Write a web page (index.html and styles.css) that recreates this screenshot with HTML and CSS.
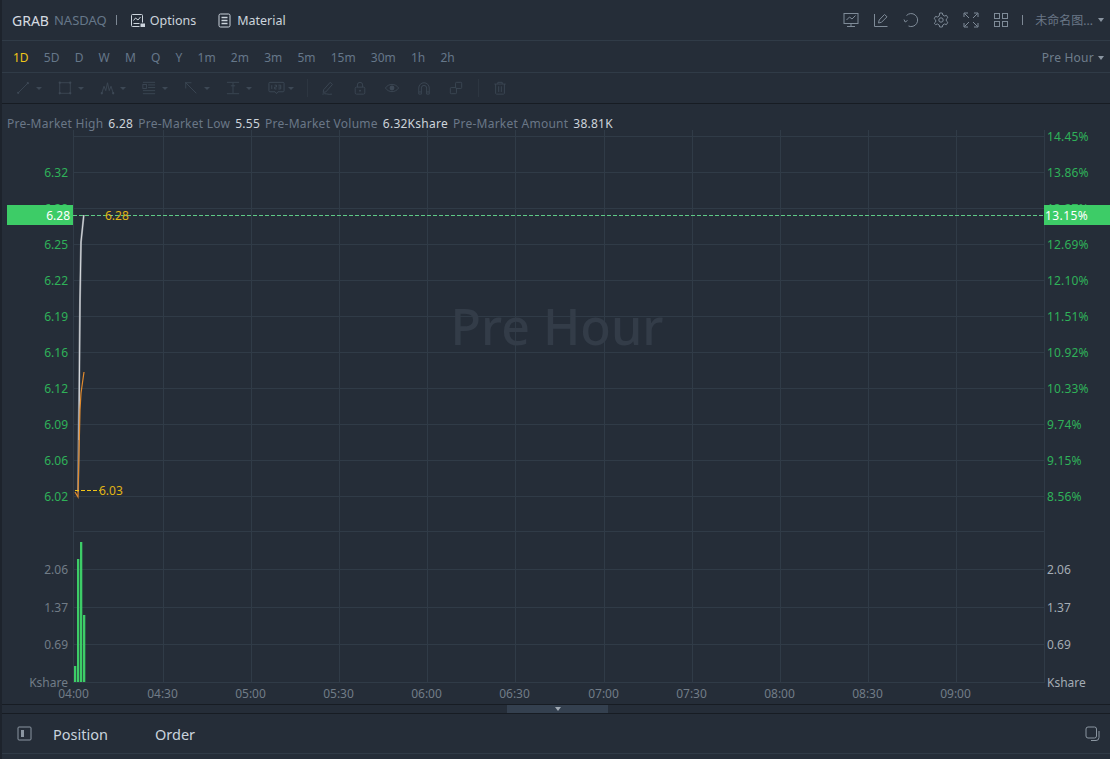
FILE: index.html
```html
<!DOCTYPE html>
<html lang="en">
<head>
<meta charset="utf-8">
<title>GRAB chart</title>
<link rel="stylesheet" href="styles.css">
</head>
<body>
<div class="app">
  <header class="topbar">
    <span class="sym">GRAB</span><span class="exch">NASDAQ</span><span class="sep sep-l"></span>
    <span class="tab tab-options">
      <svg class="ic15" viewBox="0 0 15 15"><path d="M12.500 9.500V2.500a1 1 0 0 0-1-1h-9a1 1 0 0 0-1 1v10a1 1 0 0 0 1 1h7"/><path d="M3.500 7.500l2-2.500 2.500 2 2.500-3"/><path d="M3.500 10.500h6"/><rect class="fill" x="10.500" y="10.500" width="4.500" height="3.500"/></svg>
      Options</span>
    <span class="tab tab-material">
      <svg class="ic15" viewBox="0 0 13 15"><rect x="1" y="1" width="11" height="13" rx="1.500"/><path class="thick" d="M3.500 4.500h6M3.500 7.500h6M3.500 10.500h6"/></svg>
      Material</span>
    <span class="grow"></span>
    <div class="tools">
      <svg class="ic" viewBox="0 0 16 16"><rect x="1" y="1.500" width="14" height="10"/><path d="M3.500 8l3-3 2.500 2 3.500-3.500M8 11.500v3M4 14.500h8"/></svg>
      <svg class="ic" viewBox="0 0 16 16"><path d="M1.500 2v12.500h13"/><path d="M5.500 11l.7-3L11.500 2.500l2.500 2.300L8.500 10.300z"/></svg>
      <svg class="ic" viewBox="0 0 16 16"><path d="M3.500 3.500A6.500 6.500 0 1 1 5.500 14"/><path d="M1 7.500l1.200 2.500 2.300-1.500"/></svg>
      <svg class="ic" viewBox="0 0 16 16"><path d="M6.700 1h2.600l.5 2 1.700 1 2-.6 1.300 2.300-1.500 1.400v1.800l1.500 1.400-1.300 2.300-2-.6-1.700 1-.5 2H6.700l-.5-2-1.700-1-2 .6L1.200 11.300l1.500-1.400V8.100L1.200 6.700l1.300-2.300 2 .6 1.700-1z"/><circle cx="8" cy="8" r="2.200"/></svg>
      <svg class="ic" viewBox="0 0 16 16"><path d="M1 5V1h4M11 1h4v4M15 11v4h-4M5 15H1v-4M1.500 1.500L6 6M14.500 1.500L10 6M14.500 14.500L10 10M1.500 14.500L6 10"/></svg>
      <svg class="ic" viewBox="0 0 16 16"><rect x="1.500" y="1.500" width="5" height="5"/><rect x="9.500" y="1.500" width="5" height="5"/><rect x="1.500" y="9.500" width="5" height="5"/><rect x="9.500" y="9.500" width="5" height="5"/></svg>
    </div>
    <span class="sep sep-r"></span>
    <span class="layout">未命名图...</span><span class="caret caret-top"></span>
  </header>

  <nav class="periods">
    <span class="per on">1D</span><span class="per">5D</span><span class="per">D</span><span class="per">W</span><span class="per">M</span><span class="per">Q</span><span class="per">Y</span><span class="per">1m</span><span class="per">2m</span><span class="per">3m</span><span class="per">5m</span><span class="per">15m</span><span class="per">30m</span><span class="per">1h</span><span class="per">2h</span>
    <span class="grow"></span>
    <span class="session">Pre Hour</span><span class="caret"></span>
  </nav>

  <div class="draw">
    <span class="dt"><svg class="dic" viewBox="0 0 16 16"><path d="M2.500 13.500L13.500 2.500"/><circle class="node" cx="2.500" cy="13.500" r="1.300"/><circle class="node" cx="13.500" cy="2.500" r="1.300"/></svg><i class="dc"></i></span>
    <span class="dt"><svg class="dic" viewBox="0 0 16 16"><rect x="2" y="2" width="12" height="12"/><circle class="node" cx="2" cy="2" r="1.300"/><circle class="node" cx="14" cy="2" r="1.300"/><circle class="node" cx="2" cy="14" r="1.300"/><circle class="node" cx="14" cy="14" r="1.300"/></svg><i class="dc"></i></span>
    <span class="dt"><svg class="dic dic-m" viewBox="0 0 16 16"><path d="M1.500 14l2.500-8 2 5 2-9 2 9 2-5 2.500 8"/><circle class="node" cx="1.500" cy="14" r="1.300"/><circle class="node" cx="14.500" cy="14" r="1.300"/></svg><i class="dc dc-m"></i></span>
    <span class="dt"><svg class="dic" viewBox="0 0 16 16"><path d="M1 1.500h14M7 4.500h8M7 7.500h8M1 11h14M1 14.500h14"/><rect x="1" y="4" width="4" height="4.500"/></svg><i class="dc"></i></span>
    <span class="dt"><svg class="dic" viewBox="0 0 16 16"><path d="M2 2l12 12M1.500 2h7M2 1.500v7"/></svg><i class="dc"></i></span>
    <span class="dt"><svg class="dic" viewBox="0 0 16 16"><path d="M1 1.500h14M1 14.500h14M8 2v12M5.500 5.500h5"/></svg><i class="dc"></i></span>
    <span class="dt dt-wide"><svg class="dic dic-w" viewBox="0 0 18 14"><path d="M2 1h14a1 1 0 0 1 1 1v8a1 1 0 0 1-1 1h-5.500L9 13l-1.500-2H2a1 1 0 0 1-1-1V2a1 1 0 0 1 1-1z"/><path d="M4 4v4M7 4h2v2H7v2h2M11 4h2.500v4H11M11 6h2.500"/></svg><i class="dc dc-w"></i></span>
    <i class="vsep"></i>
    <span class="dt dt-plain"><svg class="dic" viewBox="0 0 16 16"><path d="M3 10L10.500 1.500l2.500 2.500-7.500 8.500-3 .5z"/><path d="M1.500 15c4-1.500 6 1 11 0"/></svg></span>
    <span class="dt dt-plain"><svg class="dic" viewBox="0 0 16 16"><rect x="2.500" y="7" width="11" height="8" rx="1.500"/><path d="M5 7V4.500a3 3 0 0 1 6 0V7"/><circle class="node" cx="8" cy="11" r="1"/></svg></span>
    <span class="dt dt-plain"><svg class="dic" viewBox="0 0 16 16"><path d="M.5 8c3.500-5.500 11.500-5.500 15 0-3.500 5.500-11.500 5.500-15 0z"/><circle class="node" cx="8" cy="8" r="2.800"/></svg></span>
    <span class="dt dt-plain"><svg class="dic" viewBox="0 0 16 16"><path d="M2 15V8a6 6 0 0 1 12 0v7h-3V8a3 3 0 0 0-6 0v7zM2 12.500h3M11 12.500h3"/></svg></span>
    <span class="dt dt-plain"><svg class="dic" viewBox="0 0 16 16"><rect x="1.500" y="7.500" width="7" height="7" rx="1"/><rect x="7.500" y="1.500" width="7" height="7" rx="1"/></svg></span>
    <i class="vsep vsep-b"></i>
    <span class="dt dt-plain"><svg class="dic" viewBox="0 0 16 16"><path d="M1.500 3.500h13M5.500 3.500V1.500h5v2M3 3.500v10.500a1 1 0 0 0 1 1h8a1 1 0 0 0 1-1V3.500M6.500 6v6.500M9.500 6v6.500"/></svg></span>
  </div>

  <div class="stats">
    <span class="k">Pre-Market High</span><span class="v">6.28</span>
    <span class="k">Pre-Market Low</span><span class="v">5.55</span>
    <span class="k">Pre-Market Volume</span><span class="v">6.32Kshare</span>
    <span class="k">Pre-Market Amount</span><span class="v">38.81K</span>
  </div>

  <svg class="chart" viewBox="2 130 1108 574">
    <g class="grid">
      <path d="M73 136.500H1044M73 172.500H1044M73 208.500H1044M73 244.500H1044M73 280.500H1044M73 316.500H1044M73 352.500H1044M73 388.500H1044M73 424.500H1044M73 460.500H1044M73 496.500H1044M73 531.500H1044M73 569.500H1044M73 607.500H1044M73 644.500H1044M73 682.500H1044"/>
      <path d="M73.500 130V683M163.500 130V683M251.500 130V683M339.500 130V683M427.500 130V683M515.500 130V683M604.500 130V683M692.500 130V683M780.500 130V683M868.500 130V683M956.500 130V683M1044.500 130V683"/>
    </g>
    <text class="water" x="557" y="345" text-anchor="middle">Pre Hour</text>

    <g class="up end">
      <text x="68" y="177">6.32</text><text x="68" y="213">6.28</text><text x="68" y="249">6.25</text><text x="68" y="285">6.22</text><text x="68" y="321">6.19</text><text x="68" y="357">6.16</text><text x="68" y="393">6.12</text><text x="68" y="429">6.09</text><text x="68" y="465">6.06</text><text x="68" y="501">6.02</text>
    </g>
    <g class="up pct">
      <text x="1047" y="141">14.45%</text><text x="1047" y="177">13.86%</text><text x="1047" y="213">13.27%</text><text x="1047" y="249">12.69%</text><text x="1047" y="285">12.10%</text><text x="1047" y="321">11.51%</text><text x="1047" y="357">10.92%</text><text x="1047" y="393">10.33%</text><text x="1047" y="429">9.74%</text><text x="1047" y="465">9.15%</text><text x="1047" y="501">8.56%</text>
    </g>
    <g class="axis end">
      <text x="68" y="574">2.06</text><text x="68" y="612">1.37</text><text x="68" y="649">0.69</text><text x="68" y="687">Kshare</text>
    </g>
    <g class="axis-r">
      <text x="1047" y="574">2.06</text><text x="1047" y="612">1.37</text><text x="1047" y="649">0.69</text><text x="1047" y="687">Kshare</text>
    </g>
    <g class="axis mid">
      <text x="73.500" y="698">04:00</text><text x="162.500" y="698">04:30</text><text x="250.500" y="698">05:00</text><text x="338.500" y="698">05:30</text><text x="426.500" y="698">06:00</text><text x="514.500" y="698">06:30</text><text x="603.500" y="698">07:00</text><text x="691.500" y="698">07:30</text><text x="779.500" y="698">08:00</text><text x="867.500" y="698">08:30</text><text x="955.500" y="698">09:00</text>
    </g>

    <path class="dash-green" d="M73 215.500H1044"/>
    <rect class="tag" x="7" y="205" width="66" height="20"/>
    <rect class="tag" x="1044" y="205" width="66" height="20"/>
    <text class="tagt end" x="70" y="220">6.28</text>
    <text class="tagt pct-t" x="1045" y="220">13.15%</text>

    <path class="gray" d="M83.800 215L81 242L80 300L79 400L78 492"/>
    <path class="white" d="M83.800 215L81 242L80 300L79 440"/>
    <path class="orange" d="M84 372L81 393L80 410L78 497L75 492"/>
    <path class="dash-y" d="M75 490.500H100"/>
    <text class="yel" x="105" y="220">6.28</text>
    <text class="yel" x="99" y="495">6.03</text>

    <g class="bars">
      <rect x="74" y="666" width="2.300" height="16"/><rect x="77" y="559" width="2.300" height="123"/><rect x="80" y="542" width="2.300" height="140"/><rect x="83" y="615" width="2.300" height="67"/>
    </g>
  </svg>

  <div class="handle"><button class="grip" type="button"><i class="grip-c"></i></button></div>

  <div class="panel">
    <svg class="pic" viewBox="0 0 15 15"><rect x="1" y="1" width="13" height="13" rx="1"/><rect class="fill" x="4" y="4" width="3" height="7"/></svg>
    <span class="ptab ptab-a">Position</span>
    <span class="ptab">Order</span>
    <span class="grow"></span>
    <svg class="pic pic-r" viewBox="0 0 15 15"><rect x="1" y="1" width="10.500" height="11" rx="2"/><path d="M14 5v6.500a3 3 0 0 1-3 3H6"/></svg>
  </div>
  <div class="foot"></div>
</div>
</body>
</html>
```

FILE: styles.css
```css
* { box-sizing: border-box; }
html, body { margin: 0; padding: 0; background: #252d38; }
body { width: 1110px; height: 759px; overflow: hidden; font-family: "Noto Sans", "Noto Sans CJK SC", sans-serif; }
.app { width: 1110px; height: 759px; display: flex; flex-direction: column; background: #252d38; border-left: 2px solid #1d232c; }
.grow { flex: 1; }

.topbar { height: 41px; flex: none; display: flex; align-items: center; padding: 0 0 0 10px; border-bottom: 1px solid #303b47; font-size: 12.500px; }
.sym { font-size: 14px; color: #d5dbe1; }
.exch { font-size: 13px; color: #657789; margin-left: 5px; }
.sep { width: 1px; height: 10px; background: #7d8894; }
.sep-l { margin-left: 9px; }
.tab { display: flex; align-items: center; color: #ccd4dc; }
.tab-options { margin-left: 13px; }
.tab-material { margin-left: 21px; }
.ic15 { width: 15px; height: 15px; margin-right: 5px; fill: none; stroke: #ccd4dc; stroke-width: 1; }
.ic15 .fill { fill: #ccd4dc; stroke: none; }
.ic15 .thick { stroke-width: 1.400; }
.tools { display: flex; gap: 14px; margin-right: 1px; }
.ic { width: 16px; height: 16px; fill: none; stroke: #7f8b98; stroke-width: 1; }
.sep-r { margin-left: 12px; }
.layout { margin-left: 12px; color: #6a7787; font-size: 12px; }
.caret { width: 0; height: 0; border: 3px solid transparent; border-top: 4px solid #8a95a1; border-bottom: 0; }
.caret-top { margin-right: 6px; margin-left: 5px; }

.periods { height: 32px; flex: none; display: flex; align-items: center; gap: 15.200px; padding: 2px 6px 0 11px; border-bottom: 1px solid #303b47; font-size: 12px; color: #65778a; }
.per.on { color: #f0c419; }
.session { color: #6f7d8c; margin-right: -11px; letter-spacing: .2px; }

.draw { height: 31px; flex: none; display: flex; align-items: center; padding-left: 14px; border-bottom: 1px solid #171c23; }
.dt { display: flex; align-items: center; width: 42px; }
.dt-wide { width: 39px; }
.dt-plain { width: 32px; }
.dic { width: 14px; height: 14px; fill: none; stroke: #3d4855; stroke-width: 1; flex: none; }
.dic-m { width: 15px; }
.dic-w { width: 17px; }
.dic .node { fill: #3d4855; stroke: none; }
.dc { width: 0; height: 0; margin-left: 6px; border: 3px solid transparent; border-top: 3px solid #3d4855; border-bottom: 0; }
.dc-m { margin-left: 5px; }
.dc-w { margin-left: 3px; }
.vsep { width: 1px; height: 18px; background: #2d3641; margin-right: 13px; flex: none; }
.vsep-b { margin: 0 14px 0 -3px; }

.stats { height: 26px; flex: none; display: flex; align-items: center; padding: 14px 0 0 5px; font-size: 12px; line-height: 14px; letter-spacing: .25px; }
.k { color: #6a7787; margin-right: 5px; }
.v { color: #cdd4db; margin-right: 5px; }

.chart { width: 1108px; height: 574px; flex: none; display: block; }
.grid path { stroke: #303b47; stroke-width: 1; fill: none; }
.chart text { font-size: 12px; font-family: "Noto Sans", sans-serif; }
.chart .water { font-size: 50px; font-weight: 500; fill: #333c48; }
.up text { fill: #2fb158; }
.pct text { letter-spacing: .15px; }
.chart .pct-t { letter-spacing: .4px; }
.end text, text.end { text-anchor: end; }
.axis text { fill: #717c87; }
.axis-r text { fill: #a4acb4; }
.mid text { text-anchor: middle; }
.dash-green { stroke: #5fc986; stroke-width: 1; stroke-dasharray: 4 2; fill: none; }
.tag { fill: #3dcc67; }
.tagt { fill: #fff; }
.gray { stroke: #7f858d; stroke-width: 2; fill: none; }
.white { stroke: #d6d9dd; stroke-width: 1; fill: none; }
.orange { stroke: #e08a2e; stroke-width: 1.200; fill: none; }
.dash-y { stroke: #f0c419; stroke-width: 1; stroke-dasharray: 4 2; fill: none; }
.yel { fill: #e0b515; }
.bars rect { fill: #3dcc67; }

.handle { height: 10px; flex: none; border-top: 1px solid #171c23; border-bottom: 1px solid #171c23; padding-left: 505px; display: flex; }
.grip { width: 101px; height: 8px; padding: 0; border: 0; background: #34404f; display: flex; align-items: center; justify-content: center; }
.grip-c { width: 0; height: 0; border: 3.500px solid transparent; border-top: 4px solid #a2abb5; border-bottom: 0; }

.panel { height: 40px; flex: none; display: flex; align-items: center; padding: 0 10px 0 15px; border-bottom: 1px solid #303b47; }
.pic { width: 15px; height: 15px; fill: none; stroke: #8b96a1; stroke-width: 1; flex: none; }
.pic .fill { fill: #8b96a1; stroke: none; }
.ptab { font-size: 14.500px; color: #c9d3dd; }
.ptab-a { margin: 0 47px 0 21px; }
.foot { flex: 1; }
```
